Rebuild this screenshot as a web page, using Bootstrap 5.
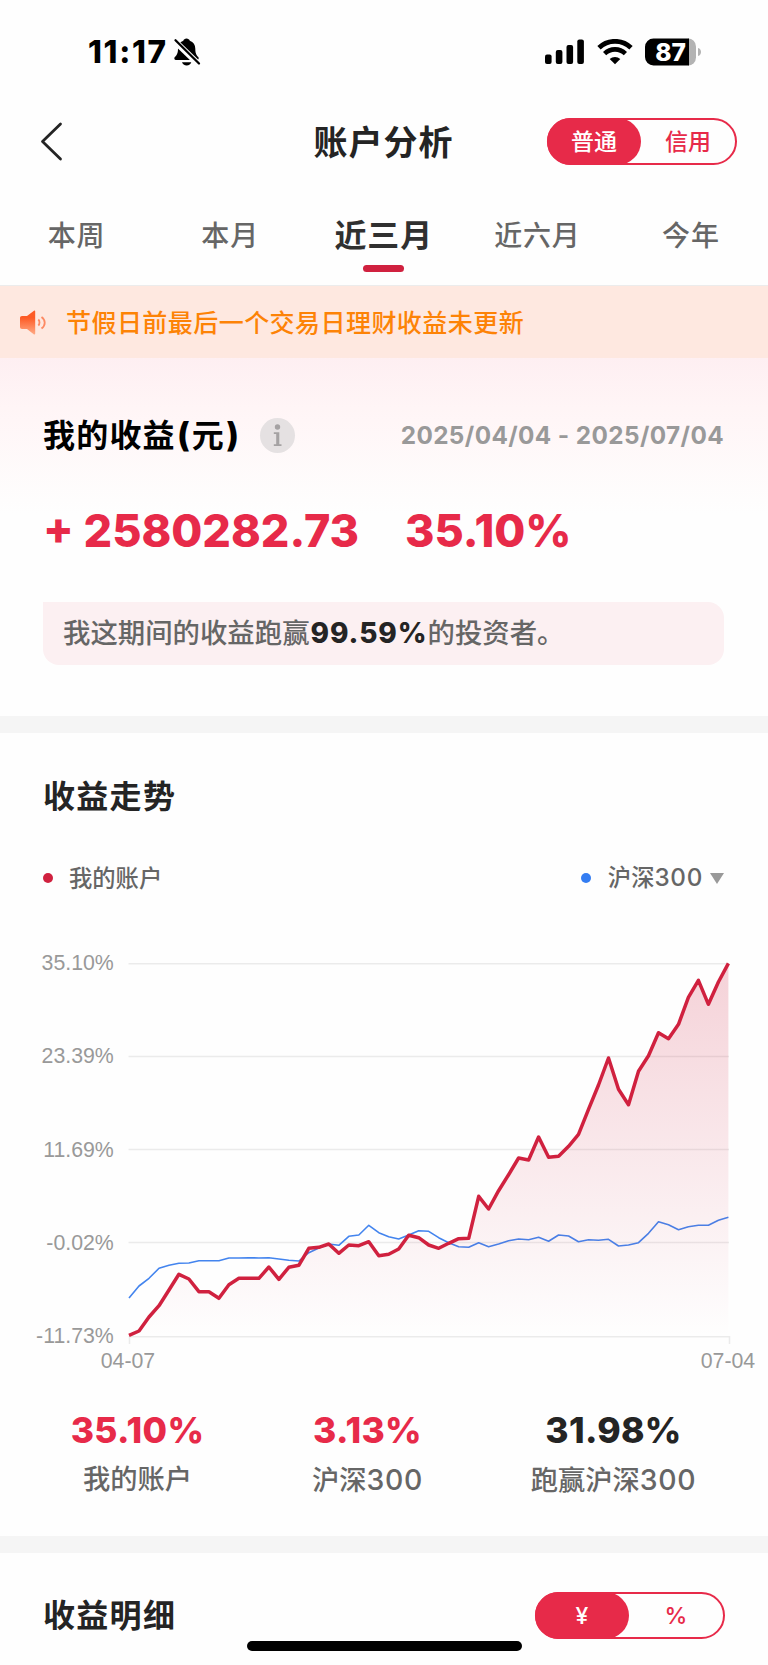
<!DOCTYPE html>
<html lang="zh-CN">
<head>
<meta charset="utf-8">
<meta name="viewport" content="width=device-width, initial-scale=1">
<title>账户分析</title>
<link href="https://cdn.jsdelivr.net/npm/bootstrap@5.3.0/dist/css/bootstrap.min.css" rel="stylesheet">
<style>
  :root { --brand:#e72a49; --ink:#242424; --grey:#666; --soft:#999; }
  body { font-family:Inter,"Noto Sans CJK SC",sans-serif; color:var(--ink); background:#fefefe; width:768px; height:1665px; overflow:hidden; line-height:1; }
  .text-brand { color:var(--brand); }
  .status-bar { height:104px; padding:0 67px 0 88px; }
  .clock { font-size:31.5px; font-weight:800; color:#000; letter-spacing:1.7px; font-kerning:none; font-feature-settings:"calt" 0; }
  .title-bar { height:76px; display:grid; grid-template-columns:1fr auto 1fr; padding:0 31px 0 40px; }
  .page-title { font-size:34px; font-weight:700; letter-spacing:1px; margin:2px 10px 0 0; }
  .switch-pill { width:190px; height:47px; border:2px solid var(--brand); border-radius:24px; font-size:23px; font-weight:500; color:var(--brand); }
  .switch-pill > span { width:95px; margin:-2px 0; padding-top:1px; display:flex; align-items:center; justify-content:center; }
  .switch-pill > .on { background:var(--brand); color:#fff; border-radius:24px; margin-left:-2px; }
  .title-bar .switch-pill { margin-top:-1px; }
  .tabs-row { height:106px; border-bottom:1.5px solid #ececec; font-size:28px; font-weight:500; letter-spacing:.8px; color:var(--grey); }
  .tabs-row a { color:inherit; text-decoration:none; flex:1 1 0; text-align:center; height:100%; line-height:112px; margin-left:-.5px; }
  .tabs-row .on { color:#303030; font-size:32px; font-weight:700; display:flex; flex-direction:column; align-items:center; }
  .tabs-row .on::after { content:""; width:41px; height:7px; border-radius:4px; background:#d0213f; margin-top:-27px; }
  .notice { height:72px; background:#fee8e0; color:#fd8306; font-size:25px; font-weight:500; letter-spacing:.45px; padding:2px 20px 0; }
  .profit { height:358px; padding:0 44px 0 43px; background:linear-gradient(#feeff2,#fff5f6 50px,#fefefe 155px); }
  .profit h2 { font-size:32px; font-weight:700; color:#000; letter-spacing:1.2px; margin:0; }
  .profit h2 span { font-weight:800; font-size:33.5px; padding:0 .8px 0 1.2px; }
  .info-dot { width:35px; height:35px; background:#e5e1e2; }
  .dates { font-size:24.3px; font-weight:700; color:var(--soft); letter-spacing:.4px; }
  .big-num { font-size:44.9px; font-weight:800; line-height:50px; }
  .beat { height:63px; background:#fcf0f2; border-radius:0 16px 16px 16px; padding:0 20px; font-size:27.4px; font-weight:500; color:var(--grey); }
  .beat strong { color:var(--ink); font-weight:800; font-size:28px; letter-spacing:.9px; margin-left:1px; }
  .divider { height:17px; background:#f5f5f5; }
  .section-title { font-size:32px; font-weight:700; letter-spacing:1.3px; margin:0; }
  .dot { width:10px; height:10px; border-radius:50%; }
  .legend-row { font-size:23.3px; font-weight:500; color:var(--grey); padding:0 44px 0 43px; height:30px; }
  .digits { letter-spacing:.7px; font-size:1.04em; }
  .caret { width:0; height:0; border:7.5px solid transparent; border-top:11px solid #999; border-bottom:0; }
  .stats { display:grid; grid-template-columns:187px 273px 219px; padding-left:44px; text-align:center; }
  .stats b { display:block; font-size:35.500px; line-height:40px; font-weight:800; letter-spacing:.3px; }
  .stats .label-line { font-size:27.3px; line-height:36px; font-weight:500; color:var(--grey); margin-top:11px; }
  .home-bar { position:absolute; left:246.5px; top:1641px; width:275px; height:10px; border-radius:5px; background:#000; }
</style>
</head>
<body class="position-relative">
  <div class="status-bar d-flex align-items-center justify-content-between">
    <div class="d-flex align-items-center">
      <span class="clock">11:17</span>
      <svg style="margin-left:5px" width="28" height="30" viewBox="0 0 28 30">
        <path d="M13.5 1.5c1.7 0 2.800 1 3.300 2.200 3.700 1.200 5.500 4.300 5.500 8 0 5 1.300 6.500 3 8.400.8 1 .3 3-1.200 3H3c-1.600 0-2.200-1.800-1.200-3 1.800-2 3.200-3.400 3.200-8.400 0-3.700 1.700-6.800 5.300-8 .5-1.200 1.500-2.200 3.200-2.200z M9 25.300h9.300c-.5 2-2.300 3.200-4.600 3.200S9.500 27.300 9 25.300z"/>
        <path d="M1 3.500 26 27.500" stroke="#fefefe" stroke-width="6"/>
        <path d="M2.500 3.300 26 26.500" stroke="#000" stroke-width="2.300" stroke-linecap="round"/>
      </svg>
    </div>
    <div class="d-flex align-items-center">
      <svg width="40" height="26" viewBox="0 0 40 26"><rect x="0" y="15.500" width="6.600" height="9.500" rx="2"/><rect x="10.800" y="11" width="6.600" height="14" rx="2"/><rect x="21.500" y="6" width="6.600" height="19" rx="2"/><rect x="32.300" y=".500" width="6.600" height="24.500" rx="2"/></svg>
      <svg style="margin-left:12px" width="36" height="26" viewBox="0 0 36 26" fill="none" stroke="#000"><path d="M2 8.800a23 23 0 0 1 32 0" stroke-width="4.800"/><path d="M7.600 14.600a15 15 0 0 1 20.800 0" stroke-width="4.600"/><path d="M18 25.300l-5.300-5.200a8 8 0 0 1 10.600 0z" fill="#000" stroke="none"/></svg>
      <svg style="margin-left:11px" width="57" height="28" viewBox="0 0 57 28">
        <path d="M44 .500a8 8 0 0 1 8 8v11a8 8 0 0 1-8 8z" fill="#b3b3b3"/><path d="M54 10c4 1 4 7 0 8z" fill="#b3b3b3"/>
        <path d="M9.500.5H45v27H9.500a8.500 8.500 0 0 1-8.500-8.500V9A8.500 8.500 0 0 1 9.500.5z"/>
        <text x="26.500" y="22.800" text-anchor="middle" font-size="24.500" font-weight="800" fill="#fff" font-family="Inter">87</text>
      </svg>
    </div>
  </div>

  <header class="title-bar align-items-center">
    <svg width="24" height="40" viewBox="0 0 24 40" fill="none" stroke="#242424" stroke-width="2.800" stroke-linecap="round" stroke-linejoin="round"><path d="M20.500 2 2.500 19.500l18 17.500"/></svg>
    <h1 class="page-title">账户分析</h1>
    <div class="switch-pill d-flex ms-auto"><span class="on">普通</span><span>信用</span></div>
  </header>

  <nav class="tabs-row d-flex">
    <a href="#">本周</a><a href="#">本月</a><a href="#" class="on">近三月</a><a href="#">近六月</a><a href="#">今年</a>
  </nav>

  <div class="notice d-flex align-items-center">
    <svg width="46" height="26" viewBox="0 0 46 26" fill="none">
      <defs><linearGradient id="horn" x1="0" y1="0" x2="0" y2="1"><stop offset=".3" stop-color="#fd5b26"/><stop offset="1" stop-color="#ffaa86"/></linearGradient></defs>
      <path d="M2 6h5l7-5.300c.6-.4 1.200 0 1.200.6v22.500c0 .7-.7 1-1.200.6L7 19H2c-1.200 0-2-.8-2-2V8c0-1.200.8-2 2-2z" fill="url(#horn)"/>
      <path d="M18.300 9.500c1.600 1.500 1.600 4.500 0 6M21.500 7c4.300 3 4.300 8.500 0 11.500" stroke="#fd8a63" stroke-width="1.800"/>
    </svg>
    <span>节假日前最后一个交易日理财收益未更新</span>
  </div>

  <section class="profit">
    <div class="d-flex align-items-center" style="padding-top:60px;height:95px">
      <h2>我的收益<span>(</span>元<span>)</span></h2>
      <svg class="info-dot rounded-circle" style="margin-left:19px" viewBox="0 0 35 35" fill="#a5a2a3"><circle cx="17.500" cy="9" r="2.700"/><path d="M13.800 14.200h5.500v12h2.200v1.900h-7.700v-1.900h2.400V16h-2.400z"/></svg>
      <span class="dates ms-auto">2025/04/04 - 2025/07/04</span>
    </div>
    <div class="big-num text-brand d-flex" style="margin-top:53px"><span>+ 2580282.73</span><span style="margin-left:46px">35.10%</span></div>
    <div class="beat d-flex align-items-center" style="margin-top:46px"><span>我这期间的收益跑赢<strong>99.59%</strong>的投资者。</span></div>
  </section>
  <div class="divider"></div>

  <section style="height:803px">
    <h2 class="section-title" style="padding:45px 0 0 43px">收益走势</h2>
    <div class="legend-row d-flex align-items-center" style="margin-top:47px">
      <i class="dot" style="background:#d0213f"></i><span style="margin-left:16px">我的账户</span>
      <i class="dot ms-auto" style="background:#347df2"></i><span style="margin-left:17px">沪深<span class="digits">300</span></span><i class="caret" style="margin-left:7px"></i>
    </div>
    <svg class="d-block" width="768" height="450" viewBox="0 940 768 450" style="margin-top:47px" font-family="Liberation Sans" font-size="21.300" fill="#999">
      <defs><linearGradient id="area" gradientUnits="userSpaceOnUse" x1="0" y1="963" x2="0" y2="1337"><stop stop-color="#d0213f" stop-opacity=".2"/><stop offset="1" stop-color="#d0213f" stop-opacity="0"/></linearGradient></defs>
      <g stroke="#ebebeb" stroke-width="1.500"><path d="M128.500 963.700H729M128.500 1056.500H729M128.500 1149.500H729M128.500 1242.500H729M129.500 1344v-7.200H729.500v7.200" fill="none"/></g>
      <polyline id="benchmark" fill="none" stroke="#4384ee" stroke-width="1.600" stroke-linejoin="round"/>
      <polygon id="fill" fill="url(#area)"/>
      <polyline id="account" fill="none" stroke="#d0213f" stroke-width="3.500" stroke-linejoin="round"/>
      <g text-anchor="end"><text x="113.800" y="970">35.10%</text><text x="113.800" y="1063">23.39%</text><text x="113.800" y="1156.500">11.69%</text><text x="113.800" y="1249.500">-0.02%</text><text x="113.800" y="1343">-11.73%</text></g>
      <g text-anchor="middle"><text x="128" y="1368">04-07</text><text x="728" y="1368">07-04</text></g>
    </svg>
    <div class="stats" style="margin-top:21px">
      <div class="text-brand"><b>35.10%</b><div class="label-line">我的账户</div></div>
      <div class="text-brand"><b>3.13%</b><div class="label-line">沪深<span class="digits">300</span></div></div>
      <div><b>31.98%</b><div class="label-line">跑赢沪深<span class="digits">300</span></div></div>
    </div>
  </section>
  <div class="divider"></div>

  <section class="d-flex justify-content-between" style="padding:39px 43px 0 43px">
    <h2 class="section-title" style="padding-top:5px">收益明细</h2>
    <div class="switch-pill d-flex"><span class="on">¥</span><span>%</span></div>
  </section>
  <div class="home-bar"></div>

<script src="https://cdn.jsdelivr.net/npm/bootstrap@5.3.0/dist/js/bootstrap.bundle.min.js"></script>
<script>
  // Daily values, in thirds of a pixel below the top of the chart
  const account = [1186,1173,1131,1097,1050,1003,1017,1055,1055,1075,1034,1015,1015,1015,981,1018,982,976,925,922,912,940,915,917,905,947,943,927,886,893,915,925,910,896,895,769,807,752,704,654,660,591,652,649,619,583,508,435,354,448,494,394,347,278,296,253,172,121,193,126,70];
  const benchmark = [1074,1038,1015,985,976,970,969,962,962,962,954,954,953,954,953,957,961,963,938,924,912,916,889,885,856,878,890,897,885,872,874,893,908,920,922,908,920,912,902,897,899,892,904,885,888,905,899,901,898,918,915,908,880,845,854,869,860,856,856,841,832];
  const points = a => a.map((v, i) => (129 + i * 9.99).toFixed(1) + ',' + (940 + v / 3).toFixed(1)).join(' ');
  document.getElementById('account').setAttribute('points', points(account));
  document.getElementById('benchmark').setAttribute('points', points(benchmark));
  document.getElementById('fill').setAttribute('points', points(account) + ' 728.4,1336.500 129,1336.500');
</script>
</body>
</html>
